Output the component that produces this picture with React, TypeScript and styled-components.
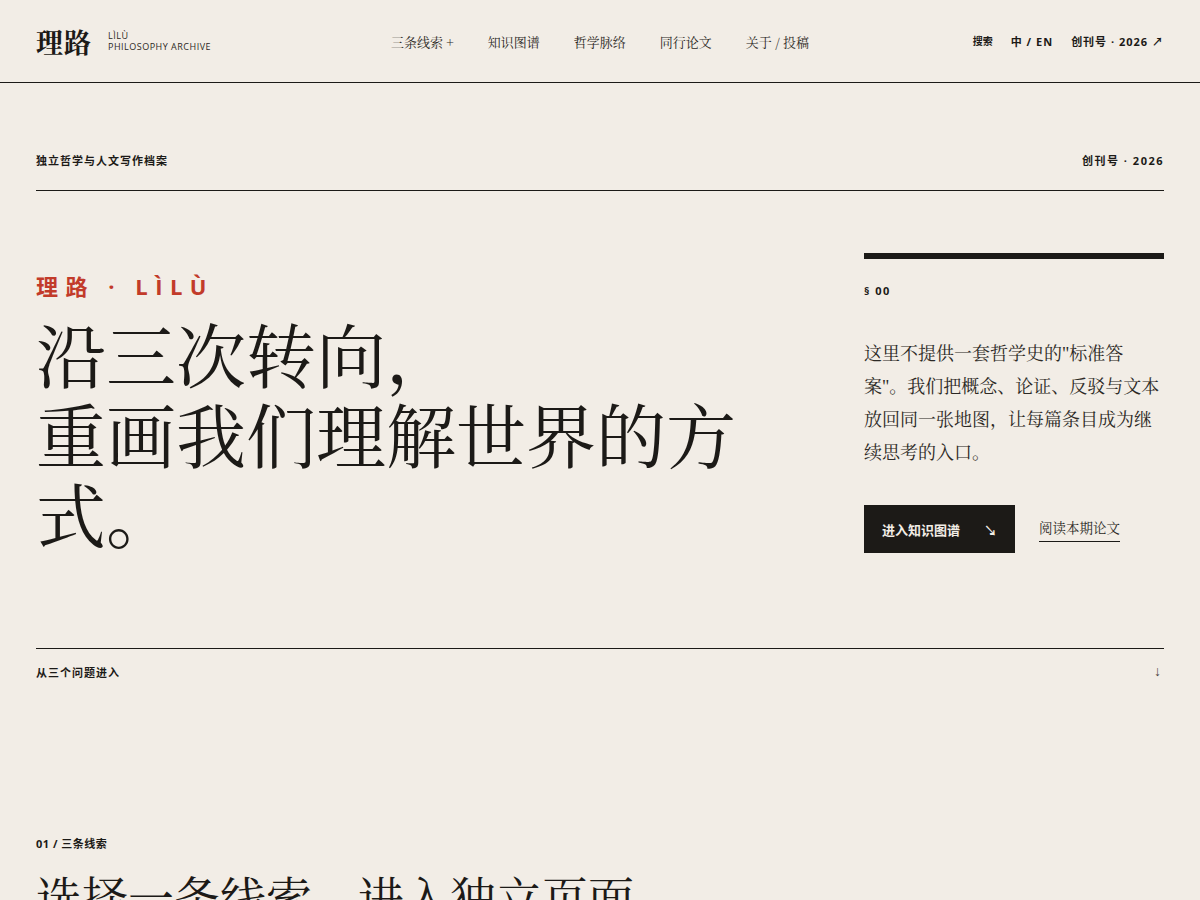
import React from 'react';
import styled, { createGlobalStyle } from 'styled-components';

const SERIF = `"Noto Serif CJK SC", "Noto Serif SC", "Liberation Serif", serif`;
const LATIN_SERIF = `"Liberation Serif", "Noto Serif CJK SC", "Noto Serif SC", serif`;
const SANS = `"Open Sans", "Noto Sans CJK SC", sans-serif`;

const GlobalStyle = createGlobalStyle`
  html, body {
    margin: 0;
    padding: 0;
    background: #f2ede6;
    color: #1c1a17;
    font-family: ${SERIF};
  }
  * { box-sizing: border-box; }
`;

// Header
const Header = styled.header`
  height: 83px;
  padding: 0 36px;
  display: grid;
  grid-template-columns: 1fr auto 1fr;
  align-items: center;
  border-bottom: 1px solid #1c1a17;
`;

const Brand = styled.div`
  display: flex;
  align-items: center;
  gap: 16px;
`;

const BrandMark = styled.div`
  font-family: ${SERIF};
  font-weight: 700;
  font-size: 27px;
  letter-spacing: 1px;
`;

const BrandSub = styled.div`
  font-family: ${SANS};
  font-size: 9px;
  line-height: 11px;
  letter-spacing: 0.5px;
  color: #2c2925;
  text-transform: uppercase;
`;

const Nav = styled.nav`
  display: flex;
  gap: 34px;
`;

const NavLink = styled.a`
  font-family: ${SERIF};
  font-size: 13px;
  color: #2c2925;
  text-decoration: none;
`;

const Tools = styled.div`
  justify-self: end;
  display: flex;
  gap: 18px;
  font-family: ${SANS};
  font-size: 11px;
  font-weight: 700;
  letter-spacing: 1px;
`;

const ToolItem = styled.span<{ $tight?: boolean }>`
  letter-spacing: ${(p) => (p.$tight ? '0' : '1px')};
  font-size: ${(p) => (p.$tight ? '10px' : '11px')};
`;

// Main
const Main = styled.main`
  padding: 0 36px;
`;

const MetaRow = styled.div`
  display: flex;
  justify-content: space-between;
  align-items: center;
  padding: 69px 0 22px;
  border-bottom: 1px solid #1c1a17;
  font-family: ${SANS};
  font-size: 11px;
  font-weight: 700;
`;

const Spaced = styled.span<{ $gap: number }>`
  letter-spacing: ${(p) => p.$gap}px;
`;

const Hero = styled.section`
  display: flex;
  justify-content: space-between;
  padding: 62px 0 95px;
  border-bottom: 1px solid #1c1a17;
`;

const HeroText = styled.div`
  width: 720px;
  padding-top: 18px;
`;

const Kicker = styled.div`
  font-family: ${SANS};
  font-weight: 700;
  font-size: 22px;
  letter-spacing: 7.5px;
  color: #c23b2a;
  line-height: 30px;
`;

const Headline = styled.h1`
  margin: 12px 0 0;
  font-family: ${SERIF};
  font-weight: 400;
  font-size: 70px;
  line-height: 80px;
  letter-spacing: 0;
`;

const Aside = styled.aside`
  width: 300px;
  border-top: 6px solid #1c1a17;
  padding-top: 24px;
`;

const SectionNo = styled.div`
  font-family: ${SANS};
  font-size: 11px;
  font-weight: 700;
  letter-spacing: 1.5px;
`;

const Lede = styled.p`
  margin: 40px 0 0;
  font-family: ${LATIN_SERIF};
  font-size: 18px;
  line-height: 33px;
  color: #2c2925;
`;

const Actions = styled.div`
  margin-top: 35px;
  display: flex;
  align-items: center;
  gap: 24px;
`;

const PrimaryButton = styled.a`
  display: flex;
  align-items: center;
  justify-content: space-between;
  width: 151px;
  height: 48px;
  padding: 0 18px;
  background: #1c1a17;
  color: #f2ede6;
  font-family: ${SANS};
  font-weight: 700;
  font-size: 13px;
  text-decoration: none;
`;

const TextLink = styled.a`
  font-family: ${SERIF};
  font-size: 13.5px;
  color: #2c2925;
  padding-bottom: 4px;
  border-bottom: 1px solid #1c1a17;
  text-decoration: none;
`;

const EntryRow = styled.div`
  display: flex;
  justify-content: space-between;
  align-items: center;
  padding-top: 15px;
  font-family: ${SANS};
  font-size: 11px;
  font-weight: 700;
  letter-spacing: 1px;
`;

const Arrow = styled.span`
  font-family: ${LATIN_SERIF};
  font-size: 14px;
  font-weight: 400;
  color: #4a4640;
  padding-right: 2px;
`;

const Threads = styled.section`
  padding-top: 155px;
`;

const ThreadsLabel = styled.div`
  font-family: ${SANS};
  font-size: 11px;
  font-weight: 700;
  letter-spacing: 0.5px;
`;

const ThreadsTitle = styled.h2`
  margin: 16px 0 0;
  font-family: ${SERIF};
  font-weight: 400;
  font-size: 46px;
  line-height: 56px;
`;

const navItems = ['三条线索 +', '知识图谱', '哲学脉络', '同行论文', '关于 / 投稿'];

export default function App() {
  return (
    <>
      <GlobalStyle />
      <Header>
        <Brand>
          <BrandMark>理路</BrandMark>
          <BrandSub>
            LÌLÙ
            <br />
            Philosophy Archive
          </BrandSub>
        </Brand>
        <Nav>
          {navItems.map((item) => (
            <NavLink key={item} href="#">
              {item}
            </NavLink>
          ))}
        </Nav>
        <Tools>
          <ToolItem $tight>搜索</ToolItem>
          <ToolItem>中 / EN</ToolItem>
          <ToolItem>创刊号 · 2026 ↗</ToolItem>
        </Tools>
      </Header>
      <Main>
        <MetaRow>
          <Spaced $gap={1}>独立哲学与人文写作档案</Spaced>
          <Spaced $gap={1.5}>创刊号 · 2026</Spaced>
        </MetaRow>
        <Hero>
          <HeroText>
            <Kicker>理路 · LÌLÙ</Kicker>
            <Headline>
              沿三次转向，
              <br />
              重画我们理解世界的方式。
            </Headline>
          </HeroText>
          <Aside>
            <SectionNo>§ 00</SectionNo>
            <Lede>
              这里不提供一套哲学史的"标准答案"。我们把概念、论证、反驳与文本放回同一张地图，让每篇条目成为继续思考的入口。
            </Lede>
            <Actions>
              <PrimaryButton href="#">
                进入知识图谱 <span>↘</span>
              </PrimaryButton>
              <TextLink href="#">阅读本期论文</TextLink>
            </Actions>
          </Aside>
        </Hero>
        <EntryRow>
          <span>从三个问题进入</span>
          <Arrow>↓</Arrow>
        </EntryRow>
        <Threads>
          <ThreadsLabel>01 / 三条线索</ThreadsLabel>
          <ThreadsTitle>选择一条线索，进入独立页面</ThreadsTitle>
        </Threads>
      </Main>
    </>
  );
}
